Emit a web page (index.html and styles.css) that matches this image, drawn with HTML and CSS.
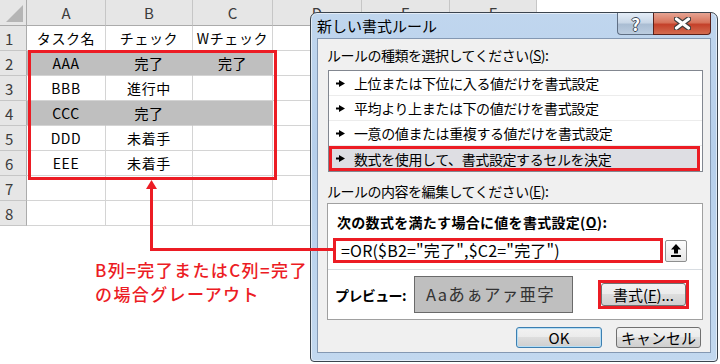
FILE: index.html
```html
<!DOCTYPE html>
<html lang="ja">
<head>
    <meta charset="UTF-8">
    <meta name="viewport" content="width=device-width, initial-scale=1.0">
    <title>新しい書式ルール</title>
    <link rel="stylesheet" href="styles.css">
</head>
<body>
    <!-- Worksheet behind the dialog -->
    <div class="sheet">
        <div class="corner"><svg width="26" height="25" viewBox="0 0 26 25"><polygon points="23,5 23,22 6,22" fill="#b5b5b5"/></svg></div>
        <div class="col-head">A</div>
        <div class="col-head">B</div>
        <div class="col-head">C</div>
        <div class="col-head">D</div>
        <div class="col-head">E</div>
        <div class="col-head">F</div>

        <div class="row-head">1</div>
        <div class="cell">タスク名</div>
        <div class="cell">チェック</div>
        <div class="cell">Wチェック</div>
        <div class="cell"></div><div class="cell"></div><div class="cell"></div>

        <div class="row-head">2</div>
        <div class="cell grey">AAA</div>
        <div class="cell grey">完了</div>
        <div class="cell grey">完了</div>
        <div class="cell"></div><div class="cell"></div><div class="cell"></div>

        <div class="row-head">3</div>
        <div class="cell">BBB</div>
        <div class="cell">進行中</div>
        <div class="cell"></div>
        <div class="cell"></div><div class="cell"></div><div class="cell"></div>

        <div class="row-head">4</div>
        <div class="cell grey">CCC</div>
        <div class="cell grey">完了</div>
        <div class="cell grey"></div>
        <div class="cell"></div><div class="cell"></div><div class="cell"></div>

        <div class="row-head">5</div>
        <div class="cell">DDD</div>
        <div class="cell">未着手</div>
        <div class="cell"></div>
        <div class="cell"></div><div class="cell"></div><div class="cell"></div>

        <div class="row-head">6</div>
        <div class="cell">EEE</div>
        <div class="cell">未着手</div>
        <div class="cell"></div>
        <div class="cell"></div><div class="cell"></div><div class="cell"></div>

        <div class="row-head">7</div>
        <div class="cell"></div><div class="cell"></div><div class="cell"></div>
        <div class="cell"></div><div class="cell"></div><div class="cell"></div>

        <div class="row-head">8</div>
        <div class="cell"></div><div class="cell"></div><div class="cell"></div>
        <div class="cell"></div><div class="cell"></div><div class="cell"></div>
    </div>

    <!-- New formatting rule dialog -->
    <div class="dialog">
        <div class="titlebar">
            <span class="title">新しい書式ルール</span>
            <span class="tb-btn tb-help">?</span>
            <span class="tb-btn tb-close">
                <svg width="17" height="13" viewBox="0 0 17 13">
                    <path d="M2.5 2L14.5 11M14.5 2L2.5 11" stroke="#3d3d3d" stroke-width="5.5" stroke-linecap="round"/>
                    <path d="M2.5 2L14.5 11M14.5 2L2.5 11" stroke="#fff" stroke-width="3.2" stroke-linecap="round"/>
                </svg>
            </span>
        </div>
        <div class="client">
            <div class="label">ルールの種類を選択してください(<u>S</u>):</div>
            <ul class="rule-list">
                <li><svg class="bullet" width="9" height="7" viewBox="0 0 9 7"><path d="M0 3.5H4" stroke="#000" stroke-width="2"/><polygon points="3,0 9,3.5 3,7"/></svg>上位または下位に入る値だけを書式設定</li>
                <li><svg class="bullet" width="9" height="7" viewBox="0 0 9 7"><path d="M0 3.5H4" stroke="#000" stroke-width="2"/><polygon points="3,0 9,3.5 3,7"/></svg>平均より上または下の値だけを書式設定</li>
                <li><svg class="bullet" width="9" height="7" viewBox="0 0 9 7"><path d="M0 3.5H4" stroke="#000" stroke-width="2"/><polygon points="3,0 9,3.5 3,7"/></svg>一意の値または重複する値だけを書式設定</li>
                <li class="selected"><svg class="bullet" width="9" height="7" viewBox="0 0 9 7"><path d="M0 3.5H4" stroke="#000" stroke-width="2"/><polygon points="3,0 9,3.5 3,7"/></svg>数式を使用して、書式設定するセルを決定</li>
            </ul>
            <div class="label label-second">ルールの内容を編集してください(<u>E</u>):</div>
            <div class="edit-box">
                <div class="edit-title">次の数式を満たす場合に値を書式設定(<u>O</u>):</div>
                <div class="formula-row">
                    <div class="formula">=OR($B2="完了",$C2="完了")</div>
                    <span class="ref-btn">
                        <svg width="10" height="13" viewBox="0 0 10 13"><polygon points="5,0 10,5.5 7,5.5 7,9.5 3,9.5 3,5.5 0,5.5"/><rect x="0" y="11" width="10" height="2"/></svg>
                    </span>
                </div>
                <div class="divider"></div>
                <div class="preview-row">
                    <span class="preview-label">プレビュー:</span>
                    <div class="preview">Aaあぁアァ亜字</div>
                    <div class="format-mark"><button class="btn format-btn">書式(<u>F</u>)...</button></div>
                </div>
            </div>
            <div class="actions">
                <button class="btn btn-default">OK</button>
                <button class="btn btn-cancel">キャンセル</button>
            </div>
        </div>
    </div>

    <!-- Red annotations -->
    <svg class="marks" width="720" height="364" viewBox="0 0 720 364">
        <rect x="29.5" y="51.5" width="246" height="127" fill="none" stroke="#ec1c24" stroke-width="3"/>
        <path d="M151.5 187V249.5H334" fill="none" stroke="#ec1c24" stroke-width="3"/>
        <polygon points="151.5,180 146,189 157,189" fill="#ec1c24"/>
    </svg>
    <p class="note">B列=完了またはC列=完了<br>の場合グレーアウト</p>
</body>
</html>
```

FILE: styles.css
```css
* {
    box-sizing: border-box;
}

body {
    margin: 0;
    width: 720px;
    height: 364px;
    overflow: hidden;
    position: relative;
    background: #fff;
    font-family: "Noto Sans CJK JP", sans-serif;
    color: #000;
}

/* worksheet */
.sheet {
    display: grid;
    grid-template-columns: 27px 79px 87px 80px 89px 88px 87px;
    grid-template-rows: 26px repeat(8, 25px);
    width: 537px;
}
.sheet > div {
    display: flex;
    align-items: center;
    justify-content: center;
    border-right: 1px solid #d4d4d4;
    border-bottom: 1px solid #d4d4d4;
    font-size: 14px;
    letter-spacing: 0.6px;
}
.sheet .corner,
.sheet .col-head,
.sheet .row-head {
    background: #e6e6e6;
    color: #3c3c3c;
    font-size: 15px;
    letter-spacing: 0;
}
.sheet .corner {
    border-right-color: #ababab;
    border-bottom-color: #ababab;
}
.sheet .col-head {
    border-right-color: #c6c6c6;
    border-bottom-color: #ababab;
}
.sheet .row-head {
    justify-content: flex-start;
    padding-left: 5px;
    border-right-color: #ababab;
    border-bottom-color: #c6c6c6;
}
.sheet .grey {
    background: #bfbfbf;
    border-right-color: #bfbfbf;
}

/* dialog window */
.dialog {
    position: absolute;
    left: 310px;
    top: 12px;
    width: 408px;
    height: 350px;
    display: flex;
    flex-direction: column;
    padding: 0 6px 8px 6px;
    border: 1px solid #3b444e;
    border-radius: 7px 7px 4px 4px;
    background: linear-gradient(#c0d6ee, #b6cfeb 40%, #c2d8ef);
    box-shadow: inset 0 0 0 1px rgba(255, 255, 255, 0.55);
}
.titlebar {
    display: flex;
    align-items: flex-start;
    height: 25px;
}
.title {
    flex: 1;
    font-size: 15px;
    line-height: 26px;
}
.tb-btn {
    display: flex;
    align-items: center;
    justify-content: center;
    height: 22px;
}
.tb-help {
    width: 36px;
    border: 1px solid #5f6f84;
    border-top: none;
    border-right: none;
    border-radius: 0 0 0 4px;
    background: linear-gradient(#e4edf7, #c9d7e7 45%, #aabdd3 55%, #bccde0);
    color: #fff;
    font-size: 17px;
    font-weight: bold;
    text-shadow: 1px 0 #3e4a58, -1px 0 #3e4a58, 0 1px #3e4a58, 0 -1px #3e4a58;
}
.tb-close {
    width: 58px;
    border: 1px solid #5b2019;
    border-top: none;
    border-radius: 0 0 4px 0;
    background: linear-gradient(#e6a493, #d7745c 45%, #c4412a 55%, #d46c50);
}
.client {
    flex: 1;
    display: flex;
    flex-direction: column;
    padding: 7px 7px 0 9px;
    border: 1px solid #8498b2;
    background: #f0f0f0;
}
.label {
    font-size: 14px;
    line-height: 18px;
    letter-spacing: -0.5px;
}
.label-second {
    margin-top: 10px;
}

.rule-list {
    list-style: none;
    margin: 6px 0 0 1px;
    padding: 0;
    border: 1px solid #828790;
    background: #fff;
}
.rule-list li {
    display: flex;
    align-items: center;
    height: 25px;
    padding-left: 7px;
    border-bottom: 1px solid #ececec;
    font-size: 14px;
    letter-spacing: -0.4px;
}
.rule-list li:last-child {
    border-bottom: none;
}
.rule-list li.selected {
    padding-left: 4px;
    margin-right: 2px;
    border: 3px solid #ec1c24;
    background: #dedee3;
}
.bullet {
    margin-right: 9px;
    flex-shrink: 0;
}

.edit-box {
    margin-top: 3px;
    height: 117px;
    border: 1px solid #a0a0a0;
    background: #fff;
}
.edit-title {
    padding: 9px 0 0 9px;
    font-size: 14px;
    font-weight: bold;
    line-height: 18px;
    letter-spacing: 0.3px;
}
.formula-row {
    display: flex;
    align-items: center;
    margin: 7px 0 0 5px;
}
.formula {
    width: 330px;
    height: 25px;
    padding-left: 5px;
    border: 3px solid #ec1c24;
    font-size: 16px;
    line-height: 19px;
    letter-spacing: 0.2px;
}
.ref-btn {
    display: flex;
    align-items: center;
    justify-content: center;
    width: 22px;
    height: 22px;
    margin-left: 2px;
    border: 1px solid #8e8f8f;
    border-radius: 2px;
    background: linear-gradient(#fdfdfd, #e6e6e6);
}
.divider {
    margin-top: 6px;
    border-top: 1px solid #d8dde2;
}
.preview-row {
    display: flex;
    align-items: center;
    margin-top: 6px;
}
.preview-label {
    width: 79px;
    margin-left: 7px;
    font-size: 14px;
    font-weight: bold;
    letter-spacing: -0.6px;
}
.preview {
    width: 159px;
    height: 37px;
    padding-left: 11px;
    border: 1px solid #6a6a6a;
    background: #bfbfbf;
    color: #333;
    font-size: 16.5px;
    line-height: 35px;
    letter-spacing: 1.3px;
}
.format-mark {
    margin-left: 25px;
    padding: 0;
    border: 3px solid #ec1c24;
}

/* buttons */
.btn {
    display: block;
    height: 21px;
    padding: 0;
    border: 1px solid #707070;
    border-radius: 3px;
    background: linear-gradient(#f2f2f2, #ebebeb 50%, #dddddd 50%, #cfcfcf);
    color: #000;
    font-family: "Noto Sans CJK JP", sans-serif;
    font-size: 15px;
    line-height: 18px;
}
.format-btn {
    width: 85px;
    height: 23px;
}
.actions {
    display: flex;
    justify-content: flex-end;
    gap: 14px;
    margin: 7px 2px 0 0;
}
.btn-default {
    width: 86px;
    border-color: #3c7fb1;
    box-shadow: inset 0 0 0 1px #b6def5;
}
.btn-cancel {
    width: 85px;
}

/* annotations */
.marks {
    position: absolute;
    left: 0;
    top: 0;
    pointer-events: none;
}
.note {
    position: absolute;
    left: 95px;
    top: 258px;
    margin: 0;
    color: #ec1c24;
    font-size: 17px;
    font-weight: 500;
    line-height: 24px;
    letter-spacing: 1.4px;
}
```
